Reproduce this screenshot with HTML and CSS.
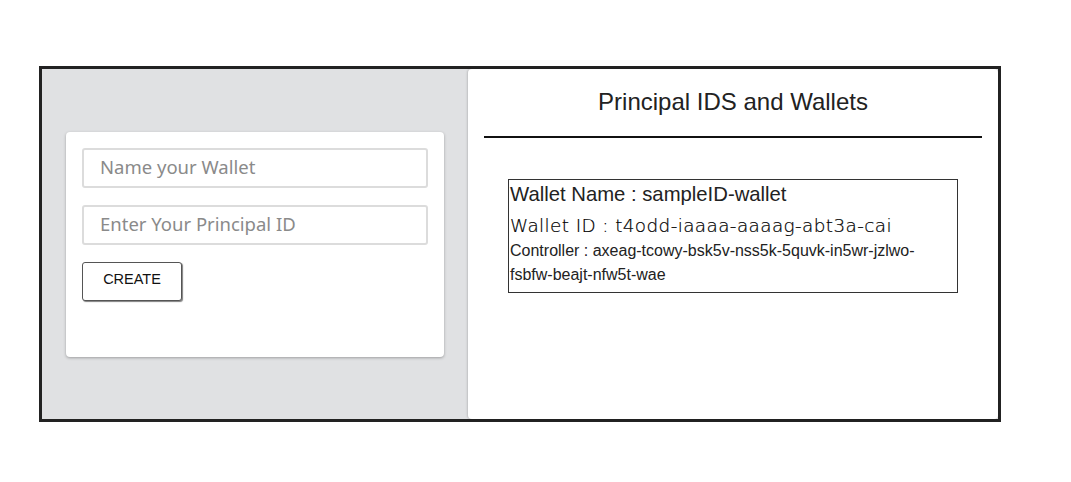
FILE: index.html
```html
<!DOCTYPE html>
<html>
<head>
<meta charset="utf-8">
<link rel="stylesheet" href="styles.css">
</head>
<body>
<div class="frame">
  <div class="left">
    <div class="card">
      <input class="field" type="text" placeholder="Name your Wallet">
      <input class="field" type="text" placeholder="Enter Your Principal ID">
      <button class="create">CREATE</button>
    </div>
  </div>
  <div class="right">
    <h2 class="title">Principal IDS and Wallets</h2>
    <hr class="rule">
    <div class="wallet">
      <div class="wname">Wallet Name : sampleID-wallet</div>
      <div class="wid">Wallet ID : t4odd-iaaaa-aaaag-abt3a-cai</div>
      <div class="ctrl">Controller : axeag-tcowy-bsk5v-nss5k-5quvk-in5wr-jzlwo-fsbfw-beajt-nfw5t-wae</div>
    </div>
  </div>
</div>
</body>
</html>
```

FILE: styles.css
```css
html, body {
  margin: 0;
  padding: 0;
  background: #fff;
}
body {
  padding: 66px 0 0 39px;
  font-family: "Liberation Sans", Arial, sans-serif;
  color: #222;
}
.frame {
  width: 956px;
  height: 350px;
  border: 3px solid #222;
  display: flex;
  background: #e0e1e3;
}
.left {
  width: 426px;
  display: flex;
  align-items: center;
  padding: 0 24px;
  box-sizing: border-box;
}
.card {
  width: 100%;
  background: #fff;
  border-radius: 4px;
  box-shadow: 0 1px 3px rgba(0,0,0,0.3);
  padding: 16px 16px 56px;
  box-sizing: border-box;
  display: flex;
  flex-direction: column;
  align-items: flex-start;
  gap: 17px;
}
.field {
  width: 100%;
  height: 40px;
  box-sizing: border-box;
  border: 2px solid #dcdcdc;
  border-radius: 3px;
  padding: 0 16px 2px;
  font-family: "Noto Sans", sans-serif;
  font-size: 18.5px;
  color: #333;
  outline: none;
}
.field::placeholder {
  color: #8a8a8a;
}
.create {
  width: 100px;
  height: 39px;
  background: #fff;
  border: 1px solid #555;
  border-radius: 3px;
  box-shadow: 1px 1px 1px rgba(0,0,0,0.5);
  font-family: "Liberation Sans", Arial, sans-serif;
  font-size: 14.5px;
  color: #111;
  padding: 0 0 5px;
}
.right {
  flex: 1;
  background: #fff;
  border-radius: 4px;
  box-shadow: -1px 0 2px rgba(0,0,0,0.15);
  padding: 0 16px;
}
.title {
  margin: 19px 0 0;
  text-align: center;
  font-weight: normal;
  font-size: 24px;
  line-height: 28px;
  color: #222;
}
.rule {
  margin: 20px 0 0;
  border: 0;
  height: 2px;
  background: #111;
}
.wallet {
  margin: 41px 24px 0;
  border: 1px solid #333;
  padding: 1px 0 5px 1px;
}
.wname {
  font-size: 20.3px;
  line-height: 26px;
}
.wid {
  margin-top: 5px;
  font-family: "DejaVu Sans", sans-serif;
  font-weight: 300;
  font-size: 18.4px;
  letter-spacing: 0.4px;
  line-height: 27px;
  color: #000;
  -webkit-text-stroke: 0.2px #000;
}
.ctrl {
  font-size: 16px;
  line-height: 24px;
  color: #222;
}
```
